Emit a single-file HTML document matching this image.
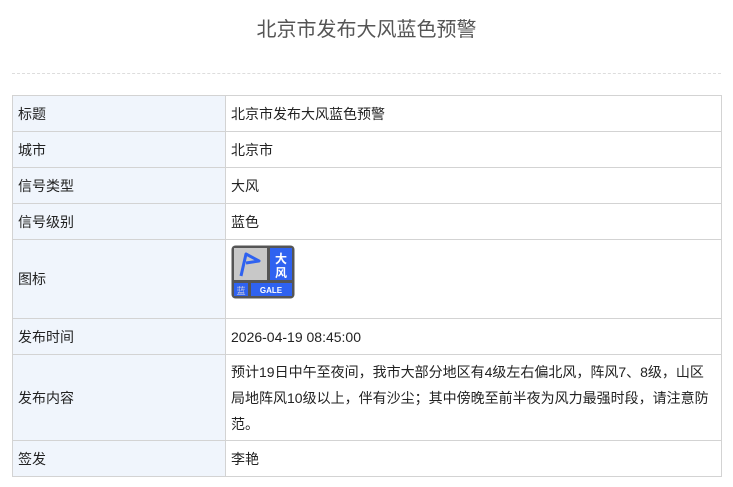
<!DOCTYPE html>
<html><head><meta charset="utf-8"><style>
body{margin:0;background:#fff;font-family:"Liberation Sans","Noto Sans CJK SC",sans-serif;}
h1{position:absolute;top:15px;left:0;width:733px;text-align:center;margin:0;font-size:20px;font-weight:normal;color:#555;line-height:30px}
.dash{position:absolute;top:73px;left:12px;width:709px;border-top:1px dashed #ddd}
table{position:absolute;top:95px;left:12px;width:710px;border-collapse:collapse;font-size:14px;color:#222}
td{border:1px solid #d3d3d3;padding:0 5px;vertical-align:middle}
td.k{background:#f0f5fc;width:202px}
</style></head><body>
<h1>北京市发布大风蓝色预警</h1>
<div class="dash"></div>
<table>
<tr style="height:36px"><td class="k">标题</td><td>北京市发布大风蓝色预警</td></tr>
<tr style="height:36px"><td class="k">城市</td><td>北京市</td></tr>
<tr style="height:36px"><td class="k">信号类型</td><td>大风</td></tr>
<tr style="height:36px"><td class="k">信号级别</td><td>蓝色</td></tr>
<tr style="height:79px"><td class="k">图标</td><td style="vertical-align:top;padding-top:5px">
<svg width="64" height="54" viewBox="0 0 64 54" style="display:block">
<rect x="0.5" y="0.5" width="63" height="53" rx="4" fill="#555"/>
<rect x="3" y="3" width="33" height="32" fill="#c8c8c8"/>
<rect x="39" y="3" width="22" height="32" fill="#2f62f0"/>
<rect x="3" y="38" width="14" height="13" fill="#2f62f0"/>
<rect x="20" y="38" width="41" height="13" fill="#2f62f0"/>
<path d="M10 31 L15 9 L28 16 L15 18" fill="none" stroke="#2f62f0" stroke-width="3" stroke-linejoin="round"/>
<text x="50" y="18" font-size="12" fill="#fff" text-anchor="middle" font-weight="bold" font-family="Noto Sans CJK SC">大</text>
<text x="50" y="32" font-size="12" fill="#fff" text-anchor="middle" font-weight="bold" font-family="Noto Sans CJK SC">风</text>
<text x="10" y="49" font-size="9" fill="#ccd" text-anchor="middle" font-family="Noto Sans CJK SC">蓝</text>
<text x="40" y="48" font-size="8" fill="#fff" text-anchor="middle" font-weight="bold" font-family="Liberation Sans">GALE</text>
</svg></td></tr>
<tr style="height:36px"><td class="k">发布时间</td><td>2026-04-19 08:45:00</td></tr>
<tr style="height:86px"><td class="k">发布内容</td><td style="line-height:26px;padding-right:10px">预计19日中午至夜间，我市大部分地区有4级左右偏北风，阵风7、8级，山区局地阵风10级以上，伴有沙尘；其中傍晚至前半夜为风力最强时段，请注意防范。</td></tr>
<tr style="height:36px"><td class="k">签发</td><td>李艳</td></tr>
</table>
</body></html>
